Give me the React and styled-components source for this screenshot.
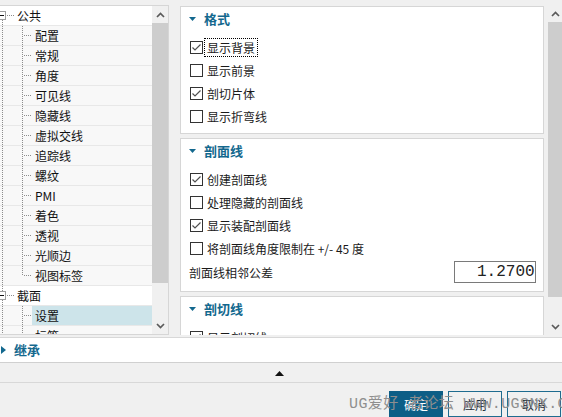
import React from "react";
import styled, { createGlobalStyle } from "styled-components";

const TEAL = "#13688e";

const GlobalStyle = createGlobalStyle`
  html, body { margin: 0; padding: 0; }
  body {
    width: 562px;
    height: 417px;
    overflow: hidden;
    background: #f0f0f0;
    font-family: "Noto Sans CJK SC", "Noto Sans", sans-serif;
    font-size: 12px;
    color: #1a1a1a;
  }
`;

const Window = styled.div`
  position: relative;
  width: 562px;
  height: 417px;
  display: flex;
  flex-direction: column;
  background: #f0f0f0;
  overflow: hidden;
`;

const Main = styled.div`
  display: flex;
  height: 330px;
  margin-top: 5px;
`;

/* ---------- tree ---------- */

const TreePanel = styled.div`
  display: flex;
  width: 168px;
  margin-left: -1px;
  border: 1px solid #d6d6d6;
  background: #fff;
`;

const TreeList = styled.div`
  flex: 1;
  overflow: hidden;
`;

const TreeRow = styled.div`
  display: flex;
  align-items: stretch;
  height: 20px;
  box-sizing: border-box;
  border-bottom: 1px solid #e8e8e8;
  background: ${(p) => (p.child ? "#f8f8f8" : "#fff")};
`;

const TreeLabel = styled.div`
  flex: 1;
  padding-left: 3px;
  line-height: 19px;
  white-space: nowrap;
  color: #111;
  background: ${(p) => (p.selected ? "#cde4ea" : "transparent")};
`;

const Guides = styled.svg`
  flex: none;
  display: block;
`;

const dot = { stroke: "#8c8c8c", strokeWidth: 1, strokeDasharray: "1 1", shapeRendering: "crispEdges" };

const TopGuides = ({ first }) => (
  <Guides width="14" height="19" viewBox="0 0 14 19">
    {!first && <line x1="2.5" y1="0" x2="2.5" y2="5" style={dot} />}
    <line x1="2.5" y1="14" x2="2.5" y2="19" style={dot} />
    <line x1="7" y1="9.5" x2="14" y2="9.5" style={dot} />
    <rect x="-2.5" y="5.5" width="8" height="8" fill="#fff" stroke="#a0a0a0" shapeRendering="crispEdges" />
    <line x1="0" y1="9.5" x2="4" y2="9.5" stroke="#111" shapeRendering="crispEdges" />
  </Guides>
);

const ChildGuides = ({ last }) => (
  <Guides width="32" height="19" viewBox="0 0 32 19">
    <line x1="2.5" y1="0" x2="2.5" y2="19" style={dot} />
    <line x1="22.5" y1="0" x2="22.5" y2={last ? 10 : 19} style={dot} />
    <line x1="24" y1="9.5" x2="32" y2="9.5" style={dot} />
  </Guides>
);

/* ---------- scrollbars ---------- */

const Scrollbar = styled.div`
  flex: none;
  width: ${(p) => p.w}px;
  display: flex;
  flex-direction: column;
  background: #f0f0f0;
`;

const ArrowBtn = styled.div`
  height: 17px;
  flex: none;
  display: flex;
  align-items: center;
  justify-content: center;
`;

const Track = styled.div`
  flex: 1;
`;

const Thumb = styled.div`
  background: #cdcdcd;
`;

const Chevron = ({ down }) => (
  <svg width="9" height="6" viewBox="0 0 9 6">
    <polyline
      points={down ? "1,1 4.5,4.5 8,1" : "1,5 4.5,1.5 8,5"}
      fill="none"
      stroke="#5a5a5a"
      strokeWidth="1.7"
    />
  </svg>
);

const VScroll = ({ w, thumb }) => (
  <Scrollbar w={w}>
    <ArrowBtn>
      <Chevron />
    </ArrowBtn>
    <Track>
      <Thumb style={{ height: thumb }} />
    </Track>
    <ArrowBtn>
      <Chevron down />
    </ArrowBtn>
  </Scrollbar>
);

/* ---------- property sections ---------- */

const RightPane = styled.div`
  flex: 1;
  display: flex;
  margin-left: 11px;
  gap: 4px;
`;

const Cards = styled.div`
  width: 364px;
  padding-top: 1px;
  display: flex;
  flex-direction: column;
  gap: 4px;
  overflow: hidden;
`;

const Card = styled.section`
  flex: none;
  background: #fff;
  border: 1px solid #d6d6d6;
  padding: 0 7px ${(p) => p.pb}px 9px;
`;

const CardHeader = styled.div`
  height: 23px;
  display: flex;
  align-items: center;
  gap: 8px;
  margin-left: -1px;
  margin-bottom: 6px;
`;

const CardTitle = styled.h3`
  margin: 0;
  font-size: 13px;
  font-weight: 700;
  color: ${TEAL};
`;

const CheckRow = styled.div`
  height: 23px;
  display: flex;
  align-items: center;
`;

const Box = styled.span`
  width: 13px;
  height: 13px;
  box-sizing: border-box;
  border: 1px solid #333;
  background: #fff;
  display: flex;
  align-items: center;
  justify-content: center;
  flex: none;
`;

const CheckText = styled.span`
  margin-left: 2px;
  padding: 0 2px;
  line-height: 17px;
  white-space: nowrap;
  outline: ${(p) => (p.focused ? "1px dotted #000" : "none")};
`;

const FieldRow = styled.div`
  height: 24px;
  display: flex;
  align-items: center;
  margin-left: -1px;
`;

const NumberBox = styled.div`
  margin-left: auto;
  width: 82px;
  height: 22px;
  box-sizing: border-box;
  border: 1px solid #7a7a7a;
  background: #fff;
  overflow: hidden;
  white-space: nowrap;
  padding-left: 22px;
  font-family: "Liberation Mono", monospace;
  font-size: 16px;
  line-height: 20px;
  color: #222;
`;

const Caret = ({ dir = "down" }) =>
  dir === "down" ? (
    <svg width="7" height="4" viewBox="0 0 7 4">
      <polygon points="0,0 7,0 3.5,4" fill={TEAL} />
    </svg>
  ) : (
    <svg width="5" height="8" viewBox="0 0 5 8">
      <polygon points="0,0 5,4 0,8" fill={TEAL} />
    </svg>
  );

const Check = ({ label, checked, focused }) => (
  <CheckRow>
    <Box>
      {checked && (
        <svg width="11" height="11" viewBox="0 0 11 11">
          <polyline points="1.5,5.5 4,8 9.5,2.5" fill="none" stroke="#505050" strokeWidth="1.2" />
        </svg>
      )}
    </Box>
    <CheckText focused={focused}>{label}</CheckText>
  </CheckRow>
);

const Section = ({ title, items, pb, children }) => (
  <Card pb={pb}>
    <CardHeader>
      <Caret />
      <CardTitle>{title}</CardTitle>
    </CardHeader>
    {items.map((it) => (
      <Check key={it.label} {...it} />
    ))}
    {children}
  </Card>
);

/* ---------- bottom ---------- */

const InheritRow = styled.div`
  margin-top: 2px;
  height: 25px;
  border-top: 1px solid #d8d8d8;
  border-bottom: 1px solid #d0d0d0;
  background: #fff;
  display: flex;
  align-items: center;
  gap: 8px;
  padding-left: 1px;
`;

const InheritTitle = styled.span`
  font-size: 13px;
  font-weight: 700;
  color: ${TEAL};
`;

const ExpandBar = styled.div`
  height: 18px;
  border-bottom: 1px solid #d8d8d8;
  display: flex;
  align-items: center;
  justify-content: center;
  padding-right: 4px;
  padding-top: 2px;
  box-sizing: content-box;
`;

const ButtonBar = styled.div`
  display: flex;
  justify-content: flex-end;
  gap: 5px;
  padding: 8px 1px 0 0;
`;

const Button = styled.button`
  width: 54px;
  height: 26px;
  font-family: inherit;
  font-size: 12px;
  padding: 0;
  border: 1px solid ${(p) => (p.primary ? "#0d5e86" : "#1e6b8f")};
  background: ${(p) => (p.primary ? "#0d5e86" : "#f0f0f0")};
  color: ${(p) => (p.primary ? "#fff" : "#1b2b36")};
`;

const Watermark = styled.div`
  position: absolute;
  left: 349px;
  top: 396px;
  font-family: "Liberation Mono", "Noto Sans CJK SC", monospace;
  font-size: 15px;
  line-height: 18px;
  letter-spacing: 0.4px;
  white-space: pre;
  color: #8e8e8e;
  pointer-events: none;
`;

const tree = [
  {
    label: "公共",
    children: ["配置", "常规", "角度", "可见线", "隐藏线", "虚拟交线", "追踪线", "螺纹", "PMI", "着色", "透视", "光顺边", "视图标签"],
  },
  { label: "截面", children: ["设置", "标签"] },
];

const format = [
  { label: "显示背景", checked: true, focused: true },
  { label: "显示前景" },
  { label: "剖切片体", checked: true },
  { label: "显示折弯线" },
];

const hatch = [
  { label: "创建剖面线", checked: true },
  { label: "处理隐藏的剖面线" },
  { label: "显示装配剖面线", checked: true },
  { label: "将剖面线角度限制在 +/- 45 度" },
];

export default function App() {
  return (
    <Window>
      <GlobalStyle />
      <Main>
        <TreePanel>
          <TreeList>
            {tree.map((node, ni) => (
              <React.Fragment key={node.label}>
                <TreeRow>
                  <TopGuides first={ni === 0} />
                  <TreeLabel>{node.label}</TreeLabel>
                </TreeRow>
                {node.children.map((c, ci) => (
                  <TreeRow child key={c}>
                    <ChildGuides last={ci === node.children.length - 1} />
                    <TreeLabel selected={c === "设置"}>{c}</TreeLabel>
                  </TreeRow>
                ))}
              </React.Fragment>
            ))}
          </TreeList>
          <VScroll w={16} thumb={260} />
        </TreePanel>

        <RightPane>
          <Cards>
            <Section title="格式" items={format} pb={5} />
            <Section title="剖面线" items={hatch} pb={7}>
              <FieldRow>
                <span>剖面线相邻公差</span>
                <NumberBox>1.27000</NumberBox>
              </FieldRow>
            </Section>
            <Section title="剖切线" items={[{ label: "显示剖切线", checked: true }]} pb={8} />
          </Cards>
          <VScroll w={14} thumb={275} />
        </RightPane>
      </Main>

      <InheritRow>
        <Caret dir="right" />
        <InheritTitle>继承</InheritTitle>
      </InheritRow>
      <ExpandBar>
        <svg width="9" height="5" viewBox="0 0 9 5">
          <polygon points="0,5 4.5,0 9,5" fill="#111" />
        </svg>
      </ExpandBar>
      <ButtonBar>
        <Button primary>确定</Button>
        <Button>应用</Button>
        <Button>取消</Button>
      </ButtonBar>
      <Watermark>{"UG爱好 者论坛 WWW.UGSNX.COM"}</Watermark>
    </Window>
  );
}
